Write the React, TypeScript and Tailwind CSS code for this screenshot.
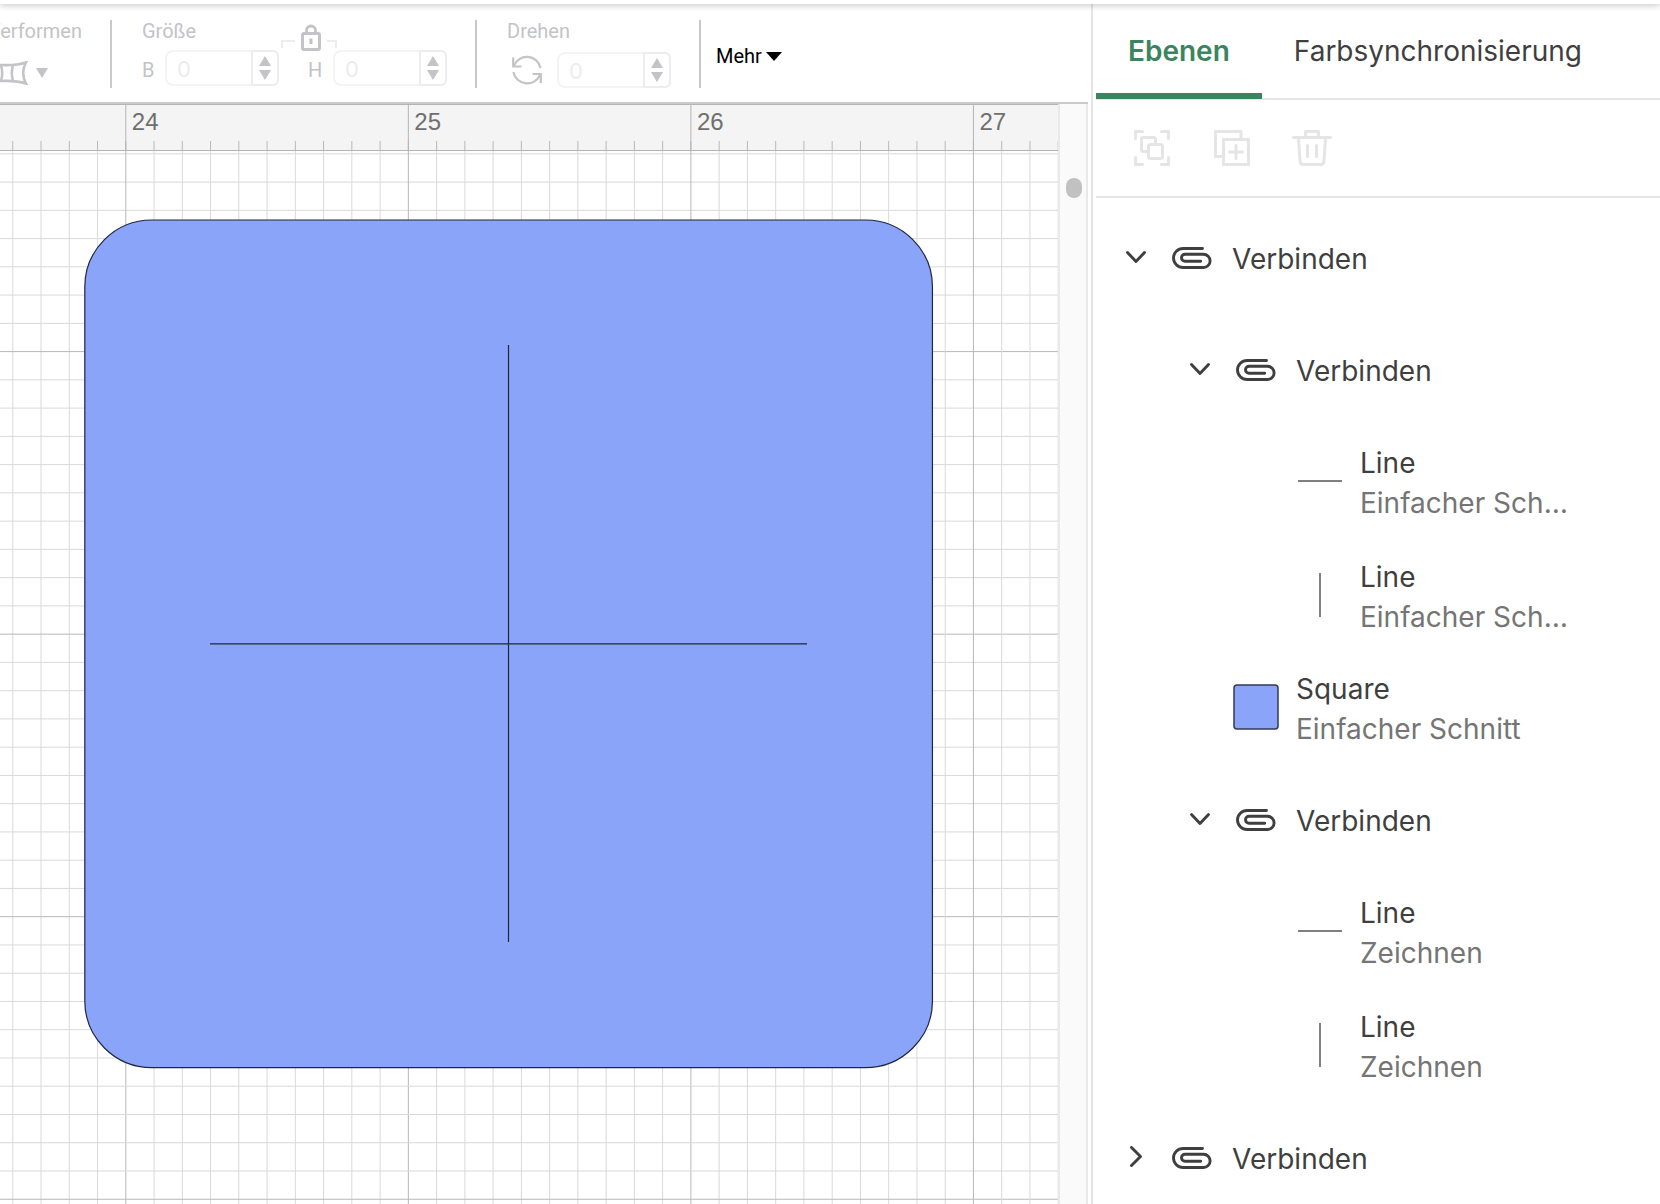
import { useState } from "react";
import type { ReactNode } from "react";

/** Pixels per inch on the canvas at the current zoom level. */
const UNIT = 282.55;
const MINOR = UNIT / 10;

/** Canvas position of the 24 inch mark and of the first full horizontal line. */
const ORIGIN_X = 125.8;
const ORIGIN_Y = 200.6;

const MARKS = [24, 25, 26, 27];
const TICKS = Array.from({ length: 120 }, (_, index) => index - 10);

interface Layer {
  id: string;
  kind: "group" | "horizontal" | "vertical" | "square";
  name: string;
  operation?: string;
  children?: Layer[];
}

const LAYERS: Layer[] = [
  {
    id: "attach-1",
    kind: "group",
    name: "Verbinden",
    children: [
      {
        id: "attach-2",
        kind: "group",
        name: "Verbinden",
        children: [
          { id: "line-1", kind: "horizontal", name: "Line", operation: "Einfacher Schnitt" },
          { id: "line-2", kind: "vertical", name: "Line", operation: "Einfacher Schnitt" },
        ],
      },
      { id: "square-1", kind: "square", name: "Square", operation: "Einfacher Schnitt" },
      {
        id: "attach-3",
        kind: "group",
        name: "Verbinden",
        children: [
          { id: "line-3", kind: "horizontal", name: "Line", operation: "Zeichnen" },
          { id: "line-4", kind: "vertical", name: "Line", operation: "Zeichnen" },
        ],
      },
    ],
  },
  { id: "attach-4", kind: "group", name: "Verbinden", children: [] },
];

function WarpIcon() {
  return (
    <svg width="44" height="24" viewBox="0 0 44 24" fill="none" stroke="currentColor" strokeWidth="2.6">
      <path d="M2 1.5C12 5 32 5 42 1.5C38.5 8 38.5 16 42 22.5C32 19 12 19 2 22.5C5.5 16 5.5 8 2 1.5Z" />
      <path d="M17 4C18.5 9 18.5 15 17 20M29 4C27.5 9 27.5 15 29 20" />
    </svg>
  );
}

function LockIcon() {
  return (
    <svg width="20" height="27" viewBox="0 0 20 27" fill="none" stroke="currentColor">
      <rect x="1.5" y="9.5" width="17" height="16" rx="1.5" strokeWidth="3" />
      <path d="M5.5 9V6.5a4.5 4.5 0 0 1 9 0V9" strokeWidth="2.8" />
      <path d="M10 14.5v5.500" strokeWidth="3" />
    </svg>
  );
}

function RotateIcon() {
  return (
    <svg width="30" height="30" viewBox="0 0 30 30" fill="none" stroke="currentColor" strokeWidth="2.2">
      <path d="M1.2 2.5v9h8.3" />
      <path d="M1.8 11A14 14 0 0 1 28.6 13" />
      <path d="M28.8 28v-9h-8.3" />
      <path d="M28.2 19.5A14 14 0 0 1 1.4 17" />
    </svg>
  );
}

function GroupIcon() {
  return (
    <svg width="36" height="36" viewBox="0 0 36 36" fill="none" stroke="currentColor" strokeWidth="3" strokeLinecap="round" strokeLinejoin="round">
      <path d="M1.5 8.5v-7h7M27.5 1.5h7v7M34.5 27.5v7h-7M8.5 34.5h-7v-7" />
      <path d="M13.5 21.5h-4a2 2 0 0 1-2-2v-10a2 2 0 0 1 2-2h10a2 2 0 0 1 2 2v4" />
      <rect x="14.5" y="14.5" width="14" height="14" rx="2" />
    </svg>
  );
}

function DuplicateIcon() {
  return (
    <svg width="36" height="36" viewBox="0 0 36 36" fill="none" stroke="currentColor" strokeWidth="3" strokeLinecap="round" strokeLinejoin="round">
      <path d="M8 26.500H1.5v-25h25.500V8" />
      <rect x="9.5" y="9.5" width="25" height="25" />
      <path d="M22 15.500v13M15.500 22h13" />
    </svg>
  );
}

function TrashIcon() {
  return (
    <svg width="40" height="36" viewBox="0 0 40 36" fill="none" stroke="currentColor" strokeWidth="3" strokeLinecap="round" strokeLinejoin="round">
      <path d="M1.5 7.5h37M13.500 7v-5.500h13V7" />
      <path d="M6.5 8l1.5 23c.2 2 1.500 3.500 3.500 3.500h17c2 0 3.300-1.500 3.500-3.500L33.5 8" />
      <path d="M15.5 15.5v11M24.5 15.5v11" />
    </svg>
  );
}

function PaperclipIcon() {
  return (
    <svg width="40" height="24" viewBox="0 0 40 24" fill="none" stroke="currentColor" strokeWidth="2.9" strokeLinecap="round">
      <path d="M30.5 1.5H11.200a9.700 9.500 0 0 0 0 19h20.300a6.500 6.500 0 0 0 0-13.200H13a3.500 3.500 0 0 0 0 7h15.700" />
    </svg>
  );
}

function ChevronIcon({ open }: { open: boolean }) {
  return (
    <svg width="32" height="24" viewBox="0 0 32 24" fill="none" stroke="currentColor" strokeWidth="2.9" strokeLinecap="round" strokeLinejoin="round">
      <path d={open ? "M7.5 6.5l8.5 9 8.500-9" : "M11.500 1.500l9 9-9 9"} />
    </svg>
  );
}

function Divider() {
  return <div className="mt-4 h-[68px] w-[2px] shrink-0 bg-[#c9c9cb]" />;
}

function NumberField({ id }: { id: string }) {
  return (
    <div className="flex h-9 w-[114px] rounded-md rounded-l-lg border-2 border-[#f4f4f4] bg-white">
      <input
        id={id}
        type="text"
        defaultValue="0"
        disabled
        className="w-[84px] min-w-0 pt-px pl-[10px] font-[Inter,sans-serif] text-[22px] text-[#ececee]"
      />
      <div className="-my-[2px] -mr-[2px] flex flex-1 flex-col items-center justify-center gap-1 rounded-r-md border-2 border-[#ededef] text-[#c3c3c8]">
        <button type="button" disabled aria-label="Erhöhen">
          <svg width="12" height="10" className="block" fill="currentColor">
            <path d="M6 0l6 10H0z" />
          </svg>
        </button>
        <button type="button" disabled aria-label="Verringern">
          <svg width="12" height="10" className="block" fill="currentColor">
            <path d="M0 0h12L6 10z" />
          </svg>
        </button>
      </div>
    </div>
  );
}

function Toolbar() {
  return (
    <div className="flex h-[100px] shrink-0 border-b-2 border-[#cbcbcb] text-xl leading-6 text-[#c3c3c8]">
      <div className="flex w-[110px] flex-col overflow-hidden pt-[15px]">
        <div className="flex w-[82px] justify-end">
          <span>Verformen</span>
        </div>
        <button type="button" disabled aria-label="Verformen" className="mt-[18px] flex w-12 items-center justify-end gap-2">
          <span className="shrink-0">
            <WarpIcon />
          </span>
          <svg width="12" height="10" className="shrink-0" fill="currentColor">
            <path d="M0 0h12L6 10z" />
          </svg>
        </button>
      </div>
      <Divider />

      <div className="flex w-[363px] flex-col pt-[15px] pl-[30px]">
        <span className="h-6">Größe</span>
        <div className="mt-[7px] flex h-9 items-center">
          <label htmlFor="width" className="w-[23px] pt-1">
            B
          </label>
          <NumberField id="width" />
          <div className="relative w-[54px] self-stretch">
            <label htmlFor="height" className="absolute top-2 left-[29px]">
              H
            </label>
            {/* Bracket with the aspect ratio lock, sits above both fields */}
            <div className="absolute -top-[26px] left-[2px] flex h-[27px]">
              <span className="mt-4 h-2 w-[14px] border-t-2 border-l-2 border-[#ededef]" />
              <button type="button" disabled aria-label="Seitenverhältnis sperren" className="mx-[6px] w-5">
                <LockIcon />
              </button>
              <span className="mt-4 h-2 w-[10px] border-t-2 border-r-2 border-[#ededef]" />
            </div>
          </div>
          <NumberField id="height" />
        </div>
      </div>
      <Divider />

      <div className="flex w-[222px] flex-col pt-[15px] pl-[30px]">
        <label htmlFor="rotation" className="h-6">
          Drehen
        </label>
        <div className="mt-[9px] flex h-9 items-center gap-[15px]">
          <span className="pl-[5px]">
            <RotateIcon />
          </span>
          <NumberField id="rotation" />
        </div>
      </div>
      <Divider />

      <button type="button" className="mt-10 ml-[15px] flex h-6 items-center gap-1 text-black">
        Mehr
        <svg width="16" height="9" fill="currentColor">
          <path d="M0 0h16L8 9z" />
        </svg>
      </button>
    </div>
  );
}

function Ruler() {
  return (
    <svg width="100%" height="47" className="block shrink-0 bg-[#f4f4f4]">
      {TICKS.map((tick) => {
        const x = ORIGIN_X + tick * MINOR;
        return <line key={tick} x1={x} x2={x} y1={37} y2={46} stroke="#b8b8b8" />;
      })}
      {MARKS.map((mark, index) => {
        const x = ORIGIN_X + index * UNIT;
        return (
          <g key={mark}>
            <line x1={x} x2={x} y1={0} y2={47} stroke="#b4b4b4" />
            <text x={x + 6} y={26} fontSize={24} fill="#6f6f6f" fontFamily="Liberation Sans, sans-serif">
              {mark}
            </text>
          </g>
        );
      })}
      <path d="M0 .5h4000M0 46.5h4000" stroke="#b4b4b4" />
    </svg>
  );
}

function Canvas() {
  const size = UNIT * 3;

  return (
    <svg width="100%" height="100%" className="block">
      {TICKS.map((tick) => (
        <g key={tick} stroke={tick % 10 === 0 ? "#b8b8b8" : "#d9d9d9"}>
          <line x1={ORIGIN_X + tick * MINOR} x2={ORIGIN_X + tick * MINOR} y1={0} y2="100%" />
          <line x1={0} x2="100%" y1={ORIGIN_Y + tick * MINOR} y2={ORIGIN_Y + tick * MINOR} />
        </g>
      ))}

      <rect x={84.8} y={69} width={size} height={size} rx={67} fill="#8aa4f9" stroke="#20263c" strokeWidth={1.2} />
      <path d="M210 492.8h597M508.5 194v597" stroke="#20263c" strokeWidth={1.2} />
    </svg>
  );
}

function Thumbnail({ kind }: { kind: Layer["kind"] }) {
  let shape: ReactNode = <rect x="2" y="2" width="44" height="44" rx="3" fill="#8aa4f9" stroke="#333a55" strokeWidth="1.5" />;
  if (kind === "horizontal") {
    shape = <path d="M2 24h44" stroke="#808080" strokeWidth="2" />;
  }
  if (kind === "vertical") {
    shape = <path d="M24 2v44" stroke="#808080" strokeWidth="2" />;
  }
  return (
    <svg width="48" height="48" className="mb-1 shrink-0">
      {shape}
    </svg>
  );
}

/** One entry of the layer tree, groups render their children one level deeper. */
function LayerItem({ layer }: { layer: Layer }) {
  const [open, setOpen] = useState(layer.children != null && layer.children.length > 0);

  if (layer.kind !== "group") {
    return (
      <li className="flex h-28 items-center gap-4 pl-12">
        <Thumbnail kind={layer.kind} />
        <div className="min-w-0">
          <p className="truncate">{layer.name}</p>
          <p className="truncate text-[#757575]">{layer.operation}</p>
        </div>
      </li>
    );
  }

  return (
    <li>
      <div className="flex h-28 items-center">
        <button type="button" aria-expanded={open} aria-label={layer.name} onClick={() => setOpen(!open)} className="mr-5 mb-[2px]">
          <ChevronIcon open={open} />
        </button>
        <PaperclipIcon />
        <span className="ml-5">{layer.name}</span>
      </div>
      {open && (
        <ul className={layer.id === "attach-1" ? "pl-16" : "flex flex-col gap-[2px] pl-16"}>
          {layer.children?.map((child) => (
            <LayerItem key={child.id} layer={child} />
          ))}
        </ul>
      )}
    </li>
  );
}

function LayersPanel() {
  return (
    <aside className="flex w-[569px] shrink-0 flex-col overflow-hidden border-l-2 border-[#e5e5e5] pl-[3px] font-[Inter,sans-serif] text-[28px] leading-10 text-[#3f3f3f]">
      <div role="tablist" className="flex h-24 shrink-0 border-b-2 border-[#e5e5e5]">
        <button
          type="button"
          role="tab"
          aria-selected="true"
          className="-mb-px h-[95px] border-b-6 border-[#3a8560] px-8 pt-1 font-semibold text-[#3a8560]"
        >
          Ebenen
        </button>
        <button type="button" role="tab" aria-selected="false" className="h-[95px] border-b-6 border-transparent px-8 pt-1">
          Farbsynchronisierung
        </button>
      </div>
      <div className="flex h-[98px] shrink-0 items-center border-b-2 border-[#e5e5e5] pl-[38px] text-[#e5e5e5]">
        <button type="button" disabled aria-label="Gruppieren">
          <GroupIcon />
        </button>
        <button type="button" disabled aria-label="Duplizieren" className="ml-11">
          <DuplicateIcon />
        </button>
        <button type="button" disabled aria-label="Löschen" className="ml-[42px]">
          <TrashIcon />
        </button>
      </div>
      <ul className="min-h-0 flex-1 overflow-hidden pt-[5px] pr-[88px] pl-6">
        {LAYERS.map((layer) => (
          <LayerItem key={layer.id} layer={layer} />
        ))}
      </ul>
    </aside>
  );
}

export default function App() {
  return (
    <div className="flex h-screen flex-col overflow-hidden bg-white font-[Roboto,sans-serif]">
      <header className="z-10 h-1 shrink-0 bg-white shadow-[0_1px_6px_rgba(0,0,0,0.3)]" />
      <div className="flex min-h-0 flex-1">
        <main className="flex min-w-0 flex-1 flex-col pr-[3px]">
          <Toolbar />
          <div className="flex min-h-0 flex-1">
            <div className="flex min-w-0 flex-1 flex-col">
              <Ruler />
              <div className="min-h-0 flex-1">
                <Canvas />
              </div>
            </div>
            <div className="w-[30px] shrink-0 border-x-2 border-[#e9e9e9] bg-[#fafafa] pt-[74px] pl-[6px]">
              <div className="h-5 w-4 rounded-full bg-[#c1c1c1]" />
            </div>
          </div>
        </main>
        <LayersPanel />
      </div>
    </div>
  );
}
